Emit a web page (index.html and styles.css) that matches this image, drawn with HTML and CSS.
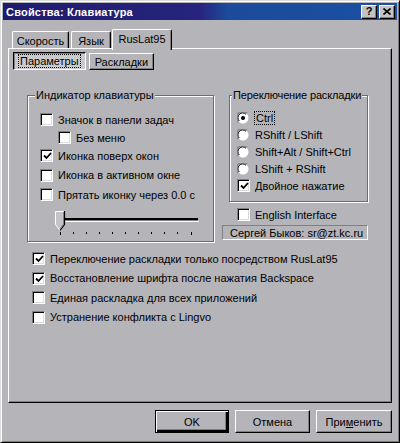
FILE: index.html
```html
<!DOCTYPE html>
<html lang="ru">
<head>
<meta charset="utf-8">
<title>Свойства: Клавиатура</title>
<link rel="stylesheet" href="styles.css">
</head>
<body>
<div class="window">
  <div class="titlebar">
    <span class="title">Свойства: Клавиатура</span>
    <div class="tbtns">
      <span class="tbtn">?</span>
      <span class="tbtn"><svg width="8" height="7" viewBox="0 0 8 7"><path d="M0.5 0.5 L7.5 6.5 M7.5 0.5 L0.5 6.5" stroke="#000" stroke-width="1.6"/></svg></span>
    </div>
  </div>

  <div class="tabs">
    <div class="tab t1">Скорость</div>
    <div class="tab t2">Язык</div>
    <div class="tab active">RusLat95</div>
  </div>

  <div class="panel">
    <div class="subtabs">
      <div class="subtab pressed"><span class="focus">Параметры</span></div>
      <div class="subtab">Раскладки</div>
    </div>

    <div class="content">
      <div class="toprow">
        <div class="group gleft">
          <div class="legend">Индикатор клавиатуры</div>
          <div class="rows rows-left">
            <label class="check r1"><span class="box"></span>Значок в панели задач</label>
            <label class="check r2"><span class="box"></span>Без меню</label>
            <label class="check r3"><span class="box on"><svg width="9" height="8" viewBox="0 0 9 8"><path d="M1 3.5 L3.5 6 L8 1" fill="none" stroke="#000" stroke-width="1.8"/></svg></span>Иконка поверх окон</label>
            <label class="check r4"><span class="box"></span>Иконка в активном окне</label>
            <label class="check r5"><span class="box"></span>Прятать иконку через 0.0 с</label>
          </div>
          <svg class="slider" width="150" height="26" viewBox="0 0 150 26">
            <rect x="6" y="8" width="138" height="3" fill="#000"/>
            <rect x="6" y="10" width="138" height="1" fill="#808080"/>
            <rect x="6" y="11" width="139" height="1" fill="#fff"/>
            <g fill="#000">
              <rect x="6" y="22" width="1" height="3"/>
              <rect x="19" y="22" width="1" height="2"/>
              <rect x="32" y="22" width="1" height="2"/>
              <rect x="45" y="22" width="1" height="2"/>
              <rect x="58" y="22" width="1" height="2"/>
              <rect x="71" y="22" width="1" height="2"/>
              <rect x="84" y="22" width="1" height="2"/>
              <rect x="97" y="22" width="1" height="2"/>
              <rect x="110" y="22" width="1" height="2"/>
              <rect x="123" y="22" width="1" height="2"/>
              <rect x="137" y="22" width="1" height="3"/>
            </g>
            <path d="M1.5 1.5 H10.5 V14.5 L6 20.5 L1.5 14.5 Z" fill="#c4c3c8" stroke="#fff" stroke-width="1"/>
            <path d="M10.5 1 V14.5 L6 20.5" fill="none" stroke="#000" stroke-width="1.2"/>
            <path d="M9.5 2 V14 L6 18.8" fill="none" stroke="#808080" stroke-width="1"/>
          </svg>
        </div>

        <div class="rightcol">
          <div class="group gright">
            <div class="legend">Переключение раскладки</div>
            <div class="rows rows-right">
              <label class="radio"><svg class="rb" width="12" height="12" viewBox="0 0 12 12"><circle cx="6" cy="6" r="5.5" fill="#fff"/><path d="M1.2 10 A5.5 5.5 0 0 1 10 1.2" fill="none" stroke="#808080" stroke-width="1.2"/><path d="M2.3 9 A4.3 4.3 0 0 1 9 2.3" fill="none" stroke="#000" stroke-width="1"/><circle cx="6" cy="6" r="2" fill="#000"/></svg><span class="focus">Ctrl</span></label>
              <label class="radio"><svg class="rb" width="12" height="12" viewBox="0 0 12 12"><circle cx="6" cy="6" r="5.5" fill="#fff"/><path d="M1.2 10 A5.5 5.5 0 0 1 10 1.2" fill="none" stroke="#808080" stroke-width="1.2"/><path d="M2.3 9 A4.3 4.3 0 0 1 9 2.3" fill="none" stroke="#000" stroke-width="1"/></svg>RShift / LShift</label>
              <label class="radio"><svg class="rb" width="12" height="12" viewBox="0 0 12 12"><circle cx="6" cy="6" r="5.5" fill="#fff"/><path d="M1.2 10 A5.5 5.5 0 0 1 10 1.2" fill="none" stroke="#808080" stroke-width="1.2"/><path d="M2.3 9 A4.3 4.3 0 0 1 9 2.3" fill="none" stroke="#000" stroke-width="1"/></svg>Shift+Alt / Shift+Ctrl</label>
              <label class="radio"><svg class="rb" width="12" height="12" viewBox="0 0 12 12"><circle cx="6" cy="6" r="5.5" fill="#fff"/><path d="M1.2 10 A5.5 5.5 0 0 1 10 1.2" fill="none" stroke="#808080" stroke-width="1.2"/><path d="M2.3 9 A4.3 4.3 0 0 1 9 2.3" fill="none" stroke="#000" stroke-width="1"/></svg>LShift + RShift</label>
              <label class="check"><span class="box on"><svg width="9" height="8" viewBox="0 0 9 8"><path d="M1 3.5 L3.5 6 L8 1" fill="none" stroke="#000" stroke-width="1.8"/></svg></span>Двойное нажатие</label>
            </div>
          </div>
          <label class="check english"><span class="box"></span>English Interface</label>
          <div class="sunken">Сергей Быков: sr@zt.kc.ru</div>
        </div>
      </div>

      <div class="rows rows-bottom">
        <label class="check"><span class="box on"><svg width="9" height="8" viewBox="0 0 9 8"><path d="M1 3.5 L3.5 6 L8 1" fill="none" stroke="#000" stroke-width="1.8"/></svg></span>Переключение раскладки только посредством RusLat95</label>
        <label class="check"><span class="box on"><svg width="9" height="8" viewBox="0 0 9 8"><path d="M1 3.5 L3.5 6 L8 1" fill="none" stroke="#000" stroke-width="1.8"/></svg></span>Восстановление шрифта после нажатия Backspace</label>
        <label class="check"><span class="box"></span>Единая раскладка для всех приложений</label>
        <label class="check"><span class="box"></span>Устранение конфликта с Lingvo</label>
      </div>
    </div>
  </div>

  <div class="buttons">
    <button class="btn b-ok default">OK</button>
    <button class="btn b-cancel">Отмена</button>
    <button class="btn b-apply">При<u>м</u>енить</button>
  </div>
</div>
</body>
</html>
```

FILE: styles.css
```css
html, body {
  margin: 0;
  padding: 0;
  background: #b5b4b9;
  overflow: hidden;
}

body {
  font: 11px "Liberation Sans", Arial, sans-serif;
  color: #000;
}

.window {
  width: 400px;
  height: 443px;
  box-sizing: border-box;
  background: #b5b4b9;
  border: 1px solid;
  border-color: #dcdcdc #000 #000 #dcdcdc;
  box-shadow: inset 1px 1px #fff, inset -1px -1px #7c7b80;
  padding: 2px;
  display: flex;
  flex-direction: column;
}

/* Title bar */
.titlebar {
  height: 17px;
  flex: none;
  display: flex;
  align-items: center;
  justify-content: space-between;
  padding: 0 2px 0 3px;
  background: linear-gradient(90deg, #1f1b6c 0%, #27247e 50%, #1c4b9c 57%, #1a50a3 100%);
  color: #fff;
}

.title {
  font-weight: bold;
  font-size: 11px;
  letter-spacing: 0.2px;
}

.tbtns {
  display: flex;
  gap: 2px;
}

.tbtn {
  width: 16px;
  height: 14px;
  box-sizing: border-box;
  background: #c3c2c7;
  border: 1px solid;
  border-color: #fff #000 #000 #fff;
  box-shadow: inset -1px -1px #808080;
  display: flex;
  align-items: center;
  justify-content: center;
  color: #000;
  font-weight: bold;
  font-size: 11px;
  line-height: 1;
}

/* Tabs */
.tabs {
  flex: none;
  display: flex;
  align-items: flex-end;
  height: 19px;
  margin-top: 9px;
  padding-left: 9px;
}

.tab {
  height: 17px;
  box-sizing: border-box;
  padding: 1px 3px 0;
  margin-right: 2px;
  border-top: 1px solid #fff;
  border-left: 1px solid #fff;
  border-right: 1px solid #000;
  box-shadow: inset -1px 0 #808080;
  border-radius: 2px 2px 0 0;
  display: flex;
  align-items: center;
  justify-content: center;
  background: #b5b4b9;
}

.t1 { width: 57px; }
.t2 { width: 40px; margin-right: 3px; }

.tab.active {
  width: 60px;
  height: 21px;
  margin: 0 0 -2px -2px;
  padding: 0 0 2px;
  position: relative;
  z-index: 1;
}

/* Panel */
.panel {
  flex: none;
  width: 384px;
  height: 355px;
  box-sizing: border-box;
  margin-left: 5px;
  border: 1px solid;
  border-color: #fff #000 #000 #fff;
  box-shadow: inset -1px -1px #808080;
  padding: 3px 0 0 4px;
}

.subtabs {
  display: flex;
  align-items: flex-start;
  gap: 3px;
  height: 18px;
}

.subtab {
  height: 17px;
  box-sizing: border-box;
  padding: 0 5px;
  border: 1px solid;
  border-color: #fff #000 #000 #fff;
  box-shadow: inset -1px -1px #808080;
  display: flex;
  align-items: center;
  margin-top: 1px;
}

.subtab.pressed {
  height: 18px;
  margin-top: 0;
  padding: 0 5px;
  border-color: #000 #fff #fff #000;
  box-shadow: inset 1px 1px #808080;
  background: repeating-conic-gradient(#d2d1d6 0 25%, #c2c1c6 0 50%) 0 0 / 2px 2px;
}

.focus {
  outline: 1px dotted #000;
  outline-offset: 0;
  padding: 0 1px;
}

.content {
  padding: 25px 0 0 14px;
}

.toprow {
  display: flex;
  align-items: flex-start;
  gap: 8px;
}

.group {
  box-sizing: border-box;
  border: 1px solid #6c6b70;
  box-shadow: 1px 1px 0 #fff, inset 1px 1px 0 #fff;
}

.legend {
  width: fit-content;
  margin: -8px 0 0 7px;
  padding: 0 1px;
  line-height: 14px;
  white-space: nowrap;
  background: #b5b4b9;
}

.gleft {
  width: 187px;
  height: 147px;
}

.rightcol {
  width: 146px;
  display: flex;
  flex-direction: column;
}

.gright {
  width: 139px;
  height: 107px;
  margin-left: 7px;
}

.gright .legend {
  margin-left: 2px;
  letter-spacing: -0.15px;
}

.rows {
  display: flex;
  flex-direction: column;
}

.check, .radio {
  display: flex;
  align-items: center;
  white-space: nowrap;
}

.rows-left {
  padding: 8px 0 0 12px;
}

.rows-left .r1 { height: 19px; }
.rows-left .r2 { height: 17px; margin-left: 18px; }
.rows-left .r3 { height: 19px; }
.rows-left .r4 { height: 20px; }
.rows-left .r5 { height: 19px; }

.rows-right {
  padding: 7px 0 0 7px;
}

.rows-right .radio,
.rows-right .check {
  height: 17px;
}

.box {
  width: 13px;
  height: 13px;
  flex: none;
  box-sizing: border-box;
  background: #fff;
  border: 1px solid;
  border-color: #808080 #fff #fff #808080;
  box-shadow: inset 1px 1px #000, inset -1px -1px #dcdcdc;
  margin-right: 5px;
  display: flex;
  align-items: center;
  justify-content: center;
}

.box svg {
  margin: 1px 0 0 1px;
}

.rb {
  flex: none;
  margin-right: 6px;
}

.slider {
  display: block;
  margin: 6px 0 0 26px;
}

.english {
  margin: 5px 0 0 15px;
  height: 15px;
}

.sunken {
  margin-top: 3px;
  height: 15px;
  box-sizing: border-box;
  border: 1px solid;
  border-color: #808080 #fff #fff #808080;
  display: flex;
  align-items: center;
  padding-left: 7px;
  white-space: nowrap;
}

.rows-bottom {
  padding: 7px 0 0 5px;
}

.rows-bottom .check {
  height: 19.5px;
}

/* Buttons */
.buttons {
  flex: none;
  display: flex;
  justify-content: flex-end;
  gap: 6px;
  margin: 7px 5px 0 0;
}

.btn {
  height: 23px;
  box-sizing: border-box;
  font: 11px "Liberation Sans", Arial, sans-serif;
  color: #000;
  background: #b5b4b9;
  border: 1px solid;
  border-color: #fff #000 #000 #fff;
  box-shadow: inset -1px -1px #808080;
  padding: 0;
}

.b-ok { width: 74px; }
.b-cancel { width: 75px; }
.b-apply { width: 76px; }

.btn.default {
  border: 1px solid #000;
  box-shadow: inset 1px 1px #fff, inset -2px -2px #000, inset -3px -3px #808080;
}

.btn u {
  text-decoration: underline;
}
```
